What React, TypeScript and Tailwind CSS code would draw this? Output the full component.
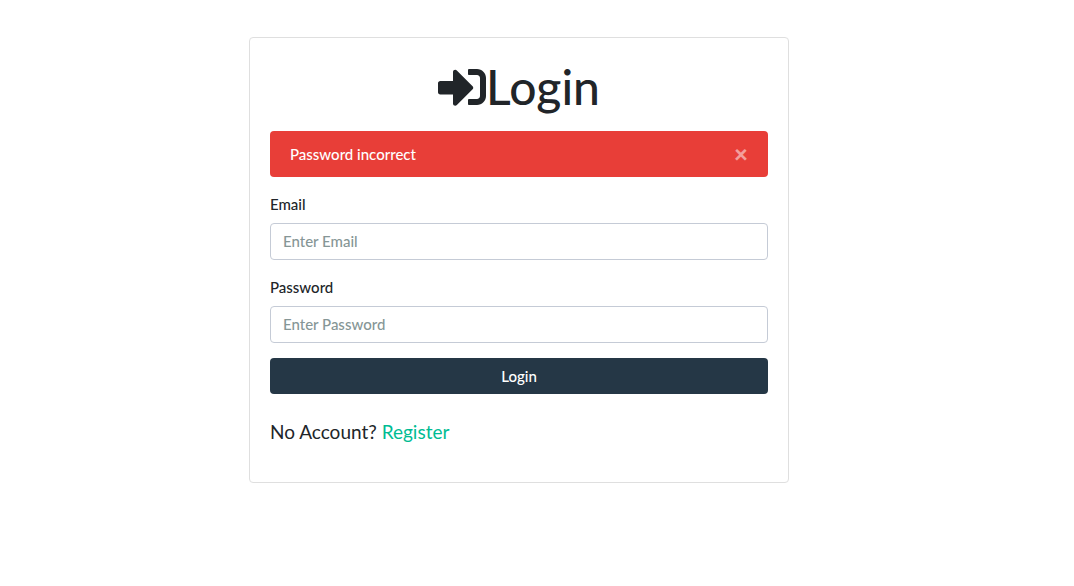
import React, { useState } from "react";

function SignInIcon() {
  return (
    <svg viewBox="0 0 512 512" fill="currentColor" aria-hidden="true" className="size-12 shrink-0">
      <path d="M416 448h-84c-6.600 0-12-5.400-12-12v-40c0-6.600 5.400-12 12-12h84c17.700 0 32-14.300 32-32V160c0-17.700-14.300-32-32-32h-84c-6.600 0-12-5.400-12-12V76c0-6.600 5.400-12 12-12h84c53 0 96 43 96 96v192c0 53-43 96-96 96zm-47-201L201 79c-15-15-41-4.500-41 17v96H24c-13.300 0-24 10.700-24 24v96c0 13.300 10.700 24 24 24h136v96c0 21.500 26 32 41 17l168-168c9.300-9.400 9.300-24.600 0-34z" />
    </svg>
  );
}

export default function App() {
  const [showAlert, setShowAlert] = useState(true);
  const field =
    "block h-[37px] w-full rounded border border-[#c5cbd6] bg-white px-3 pb-0.5 text-[15px] font-medium text-[#7b8a8b] placeholder:text-[#869696] placeholder:opacity-100";
  return (
    <div className="min-h-screen bg-white pr-9 pt-[37px] font-['Lato',sans-serif] text-[15px] leading-[23px] font-medium text-[#212529]">
      <main className="mx-auto w-full max-w-[540px] rounded border border-[#dfdfdf] p-5">
        <h1 className="mb-4 flex items-center justify-center text-5xl leading-[57px] font-medium">
          <SignInIcon />
          Login
        </h1>
        {showAlert && (
          <div role="alert" className="mb-4 flex items-center justify-between rounded bg-[#e83e38] px-5 py-[11px] leading-6 text-white">
            <span>Password incorrect</span>
            <button type="button" aria-label="Close" onClick={() => setShowAlert(false)} className="text-2xl leading-6 font-black opacity-50">
              ×
            </button>
          </div>
        )}
        <form onSubmit={(e) => e.preventDefault()}>
          <div className="mb-4">
            <label htmlFor="email" className="mb-[7px] block">Email</label>
            <input id="email" type="email" placeholder="Enter Email" className={field} />
          </div>
          <div className="mb-[15px]">
            <label htmlFor="password" className="mb-[7px] block">Password</label>
            <input id="password" type="password" placeholder="Enter Password" className={field} />
          </div>
          <button type="submit" className="block h-9 w-full rounded bg-[#253746] text-white">Login</button>
        </form>
        <p className="mt-6 mb-4 text-[19px] leading-7 font-normal">
          No Account? <a href="#register" className="text-[#00bc93]">Register</a>
        </p>
      </main>
    </div>
  );
}
